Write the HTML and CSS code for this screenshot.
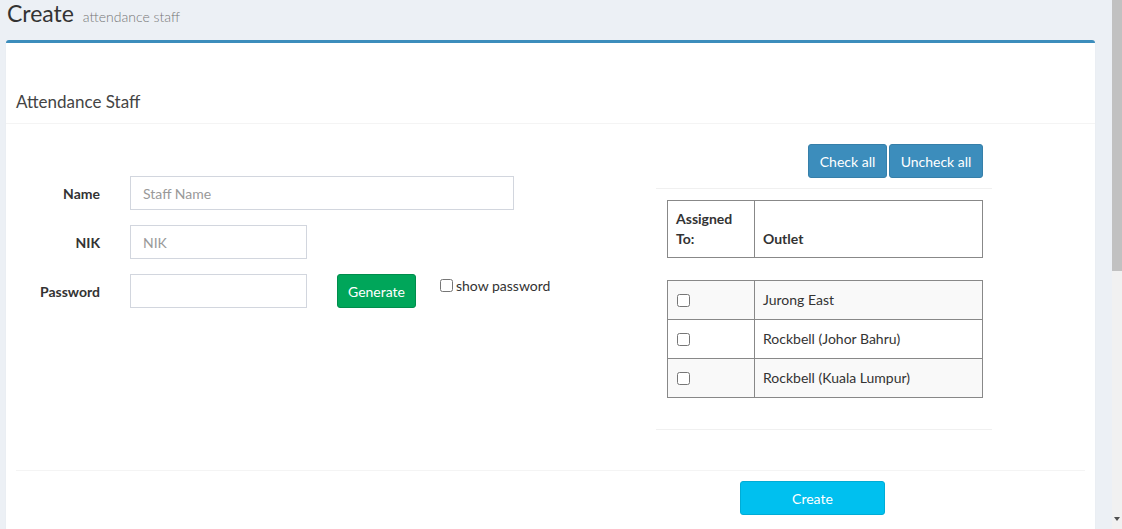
FILE: index.html
```html
<!DOCTYPE html>
<html lang="en">
<head>
<meta charset="utf-8">
<title>Create attendance staff</title>
<link rel="stylesheet" href="styles.css">
</head>
<body>
<section class="content-header">
  <h1>Create <small>attendance staff</small></h1>
</section>
<section class="content">
  <div class="box">
    <div class="box-header">
      <h3 class="box-title">Attendance Staff</h3>
    </div>
    <div class="box-body">
      <div class="cols">
        <div class="col-left">
          <div class="form-group">
            <label class="control-label">Name</label>
            <input class="form-control wide" type="text" placeholder="Staff Name">
          </div>
          <div class="form-group">
            <label class="control-label">NIK</label>
            <input class="form-control narrow" type="text" placeholder="NIK">
          </div>
          <div class="form-group">
            <label class="control-label">Password</label>
            <input class="form-control narrow" type="password">
            <button class="btn btn-success" type="button">Generate</button>
            <label class="check-label"><input type="checkbox">show password</label>
          </div>
        </div>
        <div class="col-right">
          <div class="btn-row">
            <button class="btn btn-primary" type="button">Check all</button>
            <button class="btn btn-primary" type="button">Uncheck all</button>
          </div>
          <hr class="sep">
          <table class="grid head">
            <tr><th class="c1">Assigned To:</th><th>Outlet</th></tr>
          </table>
          <table class="grid rows">
            <tr class="odd"><td class="c1"><input type="checkbox"></td><td>Jurong East</td></tr>
            <tr><td class="c1"><input type="checkbox"></td><td>Rockbell (Johor Bahru)</td></tr>
            <tr class="odd"><td class="c1"><input type="checkbox"></td><td>Rockbell (Kuala Lumpur)</td></tr>
          </table>
          <hr class="sep sep2">
        </div>
      </div>
      <div class="form-footer">
        <button class="btn btn-info" type="submit">Create</button>
      </div>
    </div>
  </div>
</section>
<div class="scrollbar" aria-hidden="true">
  <div class="scroll-thumb"></div>
  <div class="scroll-arrow"></div>
</div>
</body>
</html>
```

FILE: styles.css
```css
html { background: #ecf0f5; }

body {
  margin: 0;
  min-height: 1030px;
  background: #ecf0f5;
  font-family: "Source Sans Pro", Lato, "Liberation Sans", sans-serif;
  font-size: 14px;
  color: #333;
}

/* page scrollbar as it appears in the capture */
.scrollbar {
  position: fixed;
  top: 0;
  right: 0;
  bottom: 0;
  width: 10px;
  background: #f1f1f1;
}
.scroll-thumb {
  height: 271px;
  background: #c1c1c1;
}
.scroll-arrow {
  position: absolute;
  bottom: 8px;
  left: 2px;
  width: 0;
  height: 0;
  border-left: 3px solid transparent;
  border-right: 3px solid transparent;
  border-top: 4px solid #505050;
}

.content-header {
  height: 40px;
  padding: 0 7px;
  box-sizing: border-box;
}
.content-header h1 {
  margin: 0;
  font-size: 23px;
  font-weight: 400;
  line-height: 26px;
  color: #333;
}
.content-header small {
  font-size: 14px;
  font-weight: 300;
  color: #777;
  padding-left: 3px;
}

.content { padding: 0 27px 0 6px; }

.box {
  background: #fff;
  border-top: 3px solid #3c8dbc;
  border-radius: 3px;
  box-shadow: 0 1px 1px rgba(0,0,0,0.1);
  min-height: 700px;
}

.box-header {
  padding: 49px 10px 11px;
  border-bottom: 1px solid #f4f4f4;
}
.box-title {
  margin: 0;
  font-size: 17px;
  font-weight: 400;
  line-height: 20px;
  color: #444;
}

.box-body { padding: 0 10px; }

.cols { display: flex; }
.col-left { width: 640px; padding-top: 52px; }
.col-right { width: 336px; padding-top: 20px; }

.form-group {
  display: flex;
  align-items: center;
  margin-bottom: 15px;
}
.control-label {
  width: 84px;
  margin-right: 30px;
  text-align: right;
  font-weight: 700;
}
.form-control {
  height: 34px;
  box-sizing: border-box;
  border: 1px solid #d2d6de;
  border-radius: 0;
  padding: 6px 12px;
  font: inherit;
  color: #555;
}
.form-control::placeholder { color: #999; }
.wide { width: 384px; }
.narrow { width: 177px; }

.btn {
  height: 34px;
  box-sizing: border-box;
  border: 1px solid transparent;
  border-radius: 3px;
  padding: 0 6px;
  font: inherit;
  color: #fff;
  white-space: nowrap;
}
.btn-success { background: #00a65a; border-color: #008d4c; margin-left: 30px; width: 79px; }
.btn-primary { background: #3c8dbc; border-color: #367fa9; }
.btn-info { background: #00c0ef; border-color: #00acd6; width: 145px; }

.check-label {
  align-self: flex-start;
  margin-left: 24px;
  margin-top: 3px;
  display: flex;
  align-items: center;
  color: #333;
}
.check-label input { margin: 0 3px 0 0; width: 13px; height: 13px; }

.btn-row {
  display: flex;
  justify-content: flex-end;
  gap: 2px;
  padding-right: 9px;
}
.btn-row .btn:first-child { width: 79px; }
.btn-row .btn:last-child { width: 94px; }

.sep {
  border: 0;
  border-top: 1px solid #f0f0f0;
  margin: 10px 0 11px;
}
.sep2 { margin-top: 31px; }

.grid {
  width: 316px;
  margin-left: 11px;
  border-collapse: collapse;
  border: 1px solid #888;
}
.grid th, .grid td {
  border: 1px solid #888;
  padding: 8px;
  text-align: left;
  line-height: 20px;
}
.grid th { vertical-align: bottom; font-weight: 700; }
.grid .c1 { width: 70px; }
.head { margin-bottom: 22px; }
.rows td { height: 22px; vertical-align: middle; }
.rows td.c1 input { margin: 0 0 0 1px; width: 13px; height: 13px; display: block; }
.rows .odd { background: #f9f9f9; }

.form-footer {
  margin-top: 29px;
  border-top: 1px solid #f4f4f4;
  padding: 10px 0 10px 724px;
}
```
